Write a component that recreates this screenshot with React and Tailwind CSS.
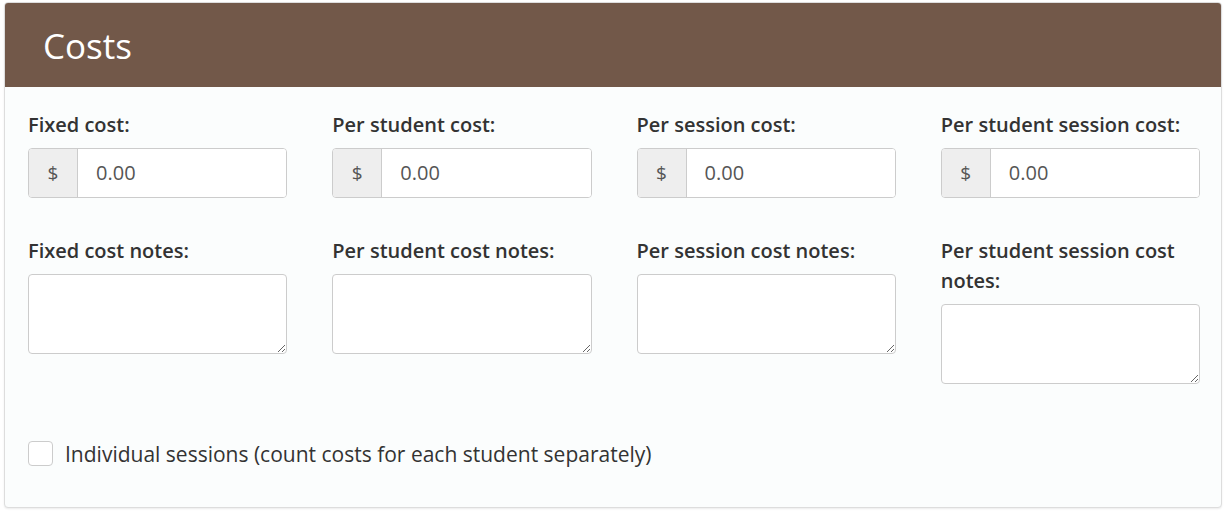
import React from 'react';

const costFields = [
  { label: 'Fixed cost:', notes: 'Fixed cost notes:' },
  { label: 'Per student cost:', notes: 'Per student cost notes:' },
  { label: 'Per session cost:', notes: 'Per session cost notes:' },
  { label: 'Per student session cost:', notes: 'Per student session cost notes:' },
];

export default function App() {
  return (
    <div className="min-h-screen bg-white pt-[2px] pl-[4px] font-['Open_Sans',sans-serif] text-[#333]">
      <div className="w-[1218px] rounded-[4px] border border-[#dddddd] bg-[#fbfdfd] shadow-[0_1px_2px_rgba(0,0,0,0.08)] overflow-hidden">
        {/* Header */}
        <div className="h-[85px] bg-[#725849] -mt-px -mx-px px-[39px] flex items-center">
          <h2 className="text-[35px] leading-none text-white font-normal pt-[2px]">Costs</h2>
        </div>

        {/* Body */}
        <div className="pl-[23px] pr-[21px] pt-[23px] pb-[39px]">
          <div className="grid grid-cols-4 gap-x-[45px]">
            {costFields.map((f) => (
              <div key={f.label} className="flex flex-col">
                <label className="text-[20px] leading-[30px] font-semibold mb-2">{f.label}</label>
                <div className="flex h-[50px] rounded-[4px] border border-[#cccccc] overflow-hidden bg-white">
                  <span className="w-[49px] shrink-0 flex items-center justify-center bg-[#eeeeee] border-r border-[#cccccc] text-[19px] text-[#555]">
                    $
                  </span>
                  <input
                    type="text"
                    defaultValue="0.00"
                    className="flex-1 min-w-0 px-[18px] text-[20px] text-[#555] outline-none bg-white"
                  />
                </div>
              </div>
            ))}
          </div>

          <div className="grid grid-cols-4 gap-x-[45px] mt-[38px] items-start">
            {costFields.map((f) => (
              <div key={f.notes} className="flex flex-col">
                <label className="text-[20px] leading-[30px] font-semibold mb-2">{f.notes}</label>
                <textarea className="h-[80px] rounded-[4px] border border-[#cccccc] bg-white outline-none" />
              </div>
            ))}
          </div>

          <label className="mt-[54px] flex items-center gap-[12px] h-[30px]">
            <span className="w-[25px] h-[25px] rounded-[4px] border border-[#cccccc] bg-white shrink-0" />
            <span className="text-[21px] leading-[30px] text-[#333] pt-px">
              Individual sessions (count costs for each student separately)
            </span>
          </label>
        </div>
      </div>
    </div>
  );
}
